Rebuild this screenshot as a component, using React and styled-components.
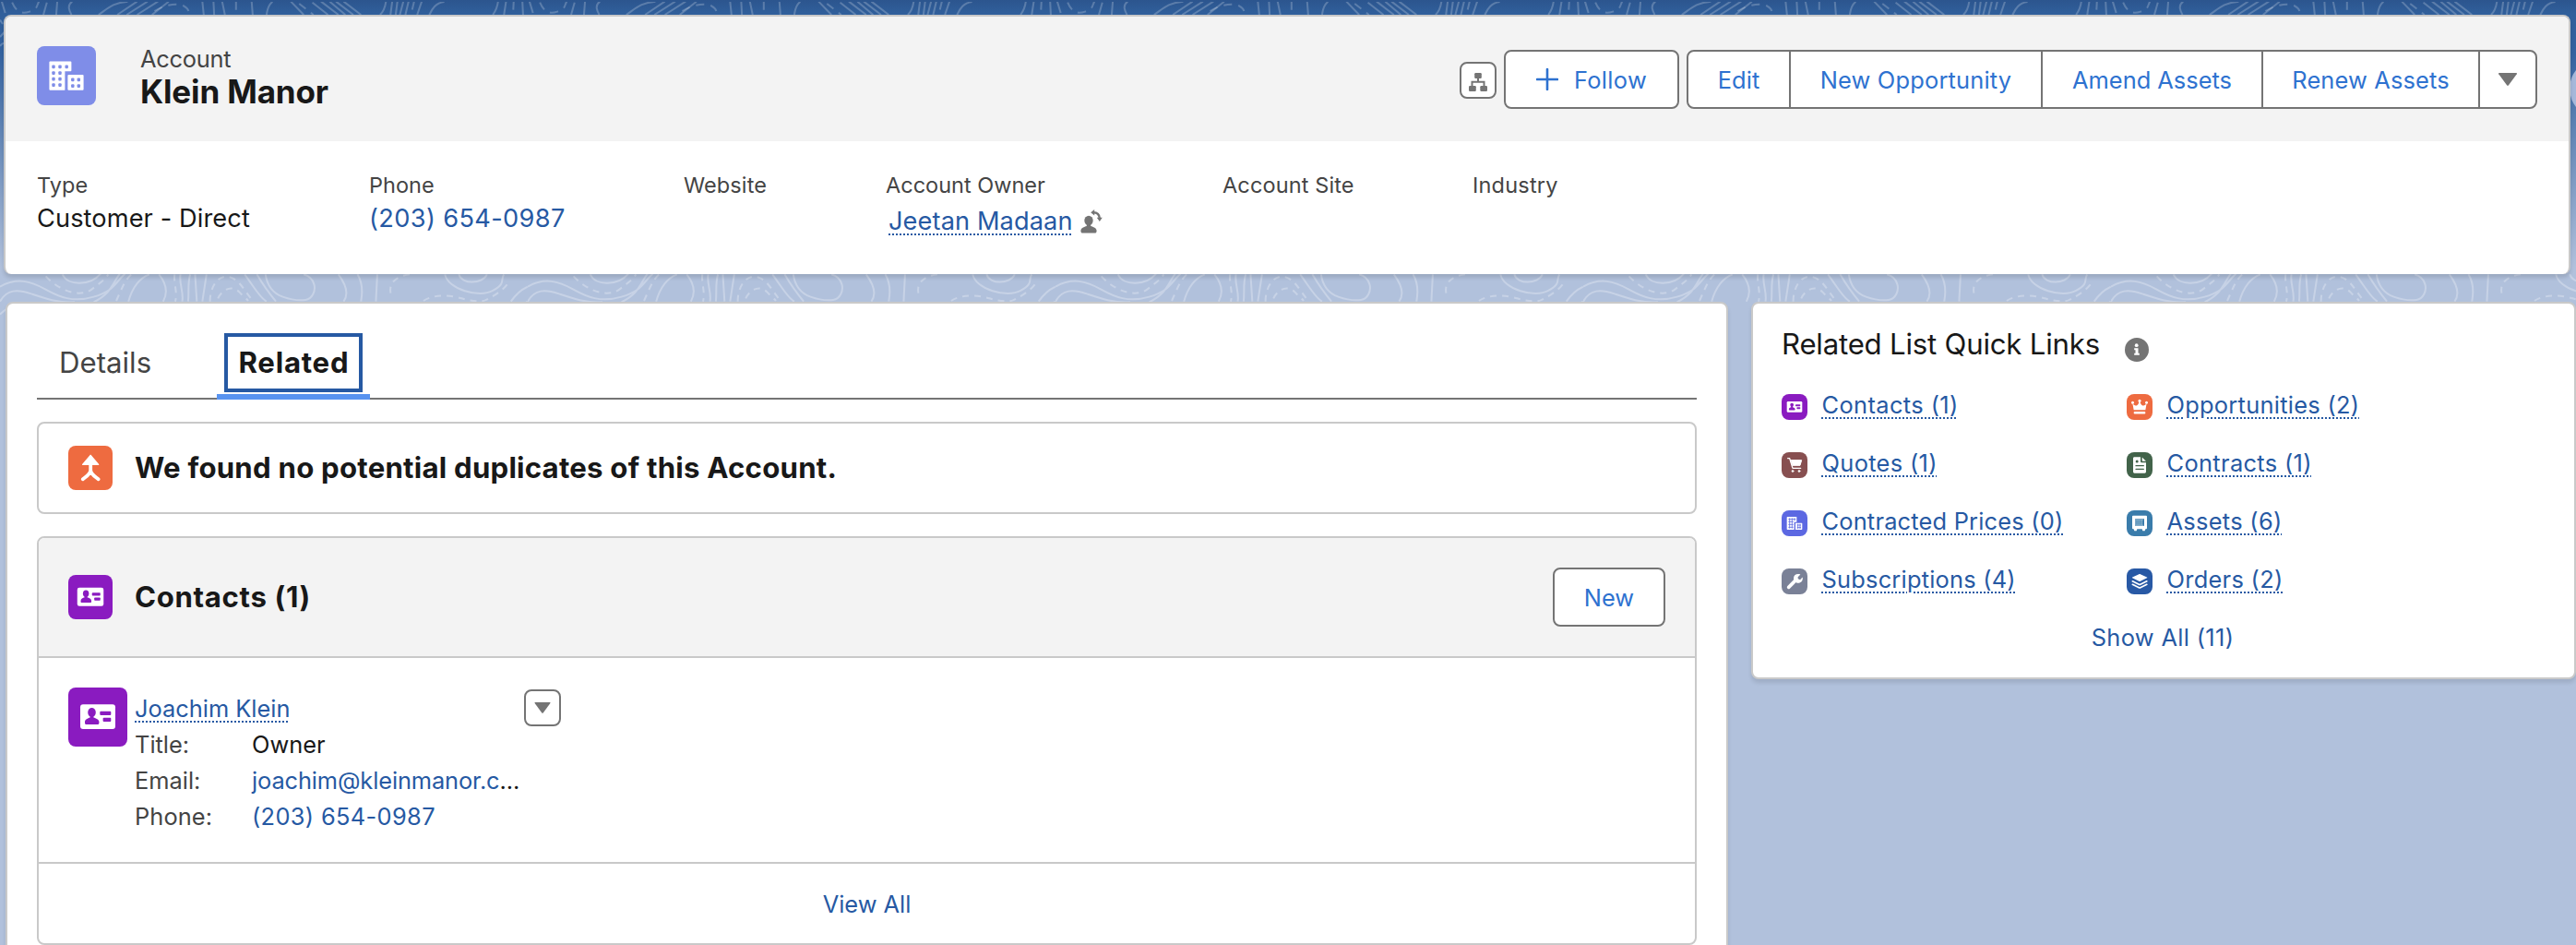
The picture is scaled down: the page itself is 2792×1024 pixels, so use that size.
import React from "react";
import styled, { createGlobalStyle, css } from "styled-components";

const color = {
  text: "#181818",
  label: "#444444",
  link: "#2659a3",
  action: "#2e72d0",
  border: "#c9c9c9",
  strong: "#747474",
  header: "#f3f3f3",
  page: "#b1c1dc",
};

const GlobalStyle = createGlobalStyle`
  *, *::before, *::after { box-sizing: border-box; }
  body {
    margin: 0;
    background: ${color.page};
    color: ${color.text};
    font-family: Inter, "Liberation Sans", sans-serif;
    font-size: 25.4px;
    line-height: 39px;
  }
`;

/* ---------- page ---------- */

const Page = styled.div`
  display: grid;
  grid-template: 1024px / 2792px;
  width: 2792px;
  height: 1024px;
  overflow: hidden;
  > * { grid-area: 1 / 1; }
`;

const Backdrop = styled.svg`
  display: block;
  width: 2792px;
  height: 1024px;
`;

const Content = styled.main`
  display: flex;
  flex-direction: column;
  padding-top: 16px;
  z-index: 1;
`;

const Columns = styled.div`
  display: flex;
  flex: none;
  align-items: flex-start;
  gap: 25px;
  padding: 30px 0 0 6px;
`;

/* ---------- text ---------- */

const Text = styled.span`
  letter-spacing: ${(p) => p.$track || 0}px;
  white-space: nowrap;
`;

const Heading = styled.h2`
  margin: 0;
  font-size: 31.2px;
  line-height: 48px;
  font-weight: ${(p) => (p.$light ? 400 : 700)};
  letter-spacing: ${(p) => p.$track || 0}px;
  white-space: nowrap;
`;

const Link = styled.a`
  color: ${color.link};
  letter-spacing: ${(p) => p.$track || 0}px;
  white-space: nowrap;
  text-decoration: none;
  ${(p) =>
    p.$dotted &&
    css`
      text-decoration: underline dotted 2px;
      text-underline-offset: 4px;
    `}
`;

/* ---------- record header ---------- */

const RecordCard = styled.section`
  flex: none;
  width: 2782px;
  height: 281px;
  margin-left: 4px;
  border: 2px solid ${color.border};
  border-bottom: 0;
  border-radius: 8px;
  background: #fff;
  box-shadow: 0 4px 4px rgba(0, 0, 0, 0.12);
  overflow: hidden;
`;

const RecordTop = styled.header`
  display: flex;
  align-items: flex-start;
  height: 135px;
  padding: 29px 34px 0;
  background: ${color.header};
`;

const RecordTitle = styled.div`
  display: flex;
  flex-direction: column;
  flex: 1;
  padding-left: 48px;
`;

const ObjectName = styled(Text)`
  color: ${color.label};
  line-height: 33px;
`;

const RecordName = styled.h1`
  margin: 0;
  font-size: 35px;
  line-height: 38px;
  font-weight: 700;
  letter-spacing: -0.15px;
`;

const Tile = styled.span`
  display: block;
  flex: none;
  width: ${(p) => p.$size}px;
  height: ${(p) => p.$size}px;
  margin-top: ${(p) => p.$top || 0}px;
  border-radius: 8px;
  background: ${(p) => p.$fill};
  svg { display: block; width: 100%; height: 100%; }
`;

const Actions = styled.div`
  display: flex;
  align-items: center;
  gap: 8px;
  margin-top: 7px;
`;

const IconButton = styled.button`
  display: flex;
  align-items: center;
  justify-content: center;
  flex: none;
  width: 40px;
  height: 40px;
  margin: ${(p) => p.$top || 0}px 0 0;
  padding: ${(p) => p.$inset || 0}px 0 0;
  border: 2px solid ${color.strong};
  border-radius: 8px;
  background: #fff;
`;

const Button = styled.button`
  display: flex;
  align-items: center;
  justify-content: center;
  gap: 17px;
  width: ${(p) => p.$width}px;
  height: 64px;
  padding: 0;
  border: 2px solid ${color.strong};
  border-radius: 8px;
  background: #fff;
  color: ${color.action};
  font: inherit;
`;

const ButtonGroup = styled.div`
  display: flex;
  ${Button} { border-radius: 0; }
  ${Button} + ${Button} { margin-left: -2px; }
  ${Button}:first-child { border-radius: 8px 0 0 8px; }
  ${Button}:last-child { border-radius: 0 8px 8px 0; }
`;

const Fields = styled.div`
  display: flex;
  padding: 32px 34px 0;
`;

const Field = styled.div`
  width: ${(p) => p.$width}px;
`;

const FieldLabel = styled.div`
  color: ${color.label};
  font-size: 23.5px;
  line-height: 31px;
  letter-spacing: ${(p) => p.$track || 0}px;
`;

const FieldValue = styled.div`
  display: flex;
  align-items: flex-start;
  font-size: 27.2px;
  line-height: 42px;
  ${(p) =>
    p.$owner &&
    css`
      gap: 8px;
      padding: 3px 0 0 3px;
      svg { margin-top: 8px; }
    `}
`;

/* ---------- related lists ---------- */

const Panel = styled.section`
  flex: none;
  width: ${(p) => p.$width}px;
  border: 2px solid ${color.border};
  border-radius: 8px;
  background: #fff;
  box-shadow: 0 4px 4px rgba(0, 0, 0, 0.1);
`;

const MainPanel = styled(Panel)`
  padding: 0 32px;
  height: 760px;
`;

const Tabs = styled.nav`
  display: flex;
  height: 104px;
  border-bottom: 2px solid ${color.strong};
  font-size: 31.2px;
`;

const Tab = styled.div`
  width: ${(p) => p.$width}px;
  height: 104px;
  padding: 32px 0 0 24px;
  line-height: 64px;
  color: ${color.label};
  ${(p) =>
    p.$active &&
    css`
      padding-left: 8px;
      border-bottom: 6px solid #5893f0;
      color: ${color.text};
      font-weight: 700;
    `}
`;

const FocusRing = styled.span`
  display: flex;
  width: 150px;
  height: 64px;
  padding-left: 11.5px;
  border: 4px solid ${color.link};
  line-height: 56px;
`;

const List = styled.article`
  margin-top: 24px;
  border: 2px solid ${color.border};
  border-radius: 8px;
  overflow: hidden;
`;

const ListHeader = styled.header`
  display: flex;
  align-items: center;
  gap: 24px;
  height: ${(p) => p.$height}px;
  padding: 0 32px;
  ${(p) =>
    p.$shaded &&
    css`
      border-bottom: 2px solid ${color.border};
      background: ${color.header};
    `}
  > ${Button} { margin-left: auto; }
`;

const ContactRow = styled.div`
  display: flex;
  align-items: flex-start;
  gap: 8px;
  height: 221px;
  padding: 32px;
`;

const ContactInfo = styled.div`
  width: 414px;
  padding-top: 3px;
`;

const Detail = styled.div`
  display: grid;
  grid-template-columns: 127px 1fr;
`;

const DetailLabel = styled(Text)`
  color: ${color.label};
`;

const ListFooter = styled.footer`
  display: flex;
  align-items: center;
  justify-content: center;
  height: 88px;
  border-top: 2px solid ${color.border};
`;

/* ---------- quick links ---------- */

const QuickPanel = styled(Panel)`
  height: 409px;
  padding: 20px 31px 24px;
`;

const QuickTitle = styled.div`
  display: flex;
  align-items: flex-start;
  gap: 27px;
  height: 70px;
  svg { margin-top: 17px; }
`;

const QuickGrid = styled.div`
  display: grid;
  grid-template-columns: 374px 1fr;
  grid-auto-rows: 63px;
`;

const QuickItem = styled.div`
  display: flex;
  align-items: flex-start;
  gap: 15.5px;
`;

const ShowAll = styled.div`
  display: flex;
  justify-content: center;
  padding-right: 2px;
`;

/* ---------- icons ---------- */

const Buildings = () => (
  <svg viewBox="0 0 64 64">
    <path
      fill="#fff"
      fillRule="evenodd"
      d="M14.4 16.6h22a1 1 0 0 1 1 1v8.6a1 1 0 0 1-1 1h-6v20a.6.6 0 0 1-.6.6H14.4a1 1 0 0 1-1-1V17.6a1 1 0 0 1 1-1Zm20 14.4h15.200a1 1 0 0 1 1 1v14.800a1 1 0 0 1-1 1H34.400a1 1 0 0 1-1-1V32a1 1 0 0 1 1-1Z"
    />
    <g fill="#7f8de8">
      {[22.4, 29, 35.6, 42.1].map((y, r) =>
        (r === 0 ? [18, 25, 32.2] : [18, 25]).map((x) => (
          <rect key={`${x}-${y}`} x={x - 1.7} y={y - 1.8} width="3.4" height="3.7" rx="1" />
        ))
      )}
      {[36.3, 43].map((y) =>
        [38.8, 45.3].map((x) => <rect key={`${x}-${y}`} x={x - 1.7} y={y - 1.8} width="3.4" height="3.7" rx="1" />)
      )}
    </g>
  </svg>
);

const Merge = () => (
  <svg viewBox="0 0 48 48">
    <path fill="#fff" d="M24.900 10.200 33 19.700c.6.700.3 1.400-.7 1.400H16c-1 0-1.300-.7-.7-1.400l8.100-9.500c.5-.5 1-.5 1.500 0Z" />
    <path d="M24.200 19v8.400M15.800 36.200c4-3.200 8.400-5.400 8.400-10 0 4.600 4.400 6.800 8.400 10" fill="none" stroke="#fff" strokeWidth="3.800" strokeLinecap="round" />
  </svg>
);

const ContactCard = ({ fill }) => (
  <svg viewBox="0 0 64 64">
    <rect x="13" y="18.300" width="38" height="26.700" rx="3" fill="#fff" />
    <g fill={fill}>
      <ellipse cx="25.500" cy="27" rx="4.300" ry="4.900" />
      <path d="M23.600 29h3.800v3.400c2.500.9 6 2.100 6 4.800v1.300c0 .9-.7 1.500-1.500 1.500H19.500c-.9 0-1.500-.6-1.500-1.500v-1.300c0-2.700 3.200-3.900 5.600-4.800Z" />
      <rect x="34.300" y="25.800" width="12" height="4.200" rx="1" />
      <rect x="37.600" y="32.800" width="8.700" height="4.200" rx="1" />
    </g>
  </svg>
);

const Cart = () => (
  <svg viewBox="0 0 84 84" fill="none" stroke="#fff" strokeLinecap="round" strokeLinejoin="round">
    <path d="M20 20h6l10 32h26" strokeWidth="4" />
    <path d="M30 26h35l-5 17H35Z" fill="#fff" strokeWidth="3" />
    <circle cx="36" cy="61.500" r="3" fill="#fff" strokeWidth="2" />
    <circle cx="57" cy="61.500" r="3" fill="#fff" strokeWidth="2" />
  </svg>
);

const Crown = () => (
  <svg viewBox="0 0 84 84" fill="#fff">
    <circle cx="19.500" cy="28" r="4.500" />
    <circle cx="42" cy="22" r="4.500" />
    <circle cx="64.500" cy="28" r="4.500" />
    <path d="M19 30c5 8 14 12 20 0l2-8h2l2 8c6 12 15 8 20 0l-4 22H23Z" />
    <rect x="23" y="57" width="38" height="7.500" rx="3" />
  </svg>
);

const Contract = () => (
  <svg viewBox="0 0 84 84">
    <path fill="#fff" d="M25 16h20v13c0 3 2 5 5 5h13v30c0 2-2 4-4 4H25c-2 0-4-2-4-4V20c0-2 2-4 4-4Z" />
    <path fill="#fff" d="M50 16.500 63 29H52c-1 0-2-1-2-2Z" />
    <path d="M30 44h25M30 55h25" stroke="#42634a" strokeWidth="4" strokeLinecap="round" />
    <circle cx="33.500" cy="30" r="4.500" fill="#42634a" />
  </svg>
);

const SmallBuildings = () => (
  <svg viewBox="0 0 84 84">
    <path fill="#fff" d="M19 21h30v17H41v25H19c-1 0-2-1-2-2V23c0-1 1-2 2-2ZM45 41h20c1 0 2 1 2 2v18c0 1-1 2-2 2H45Z" />
    <path
      d="M22 29h24M22 37h16M22 46h16M22 55h16M26 25v34M34 25v34M42 25v9M50 48h13M50 56h13M53 44v16M60 44v16"
      stroke="#5c68e2"
      strokeWidth="2.400"
    />
  </svg>
);

const Safe = () => (
  <svg viewBox="0 0 84 84">
    <path fill="#fff" d="M21 17h42c2 0 3 1 3 3v38c0 2-1 3-3 3h-2l-2 6h-7l-2-6H34l-2 6h-7l-2-6h-2c-2 0-3-1-3-3V20c0-2 1-3 3-3Z" />
    <rect x="28" y="27" width="29" height="24" rx="1" fill="#3a7cab" />
    <path d="M33 30v18M38.500 30v18M44 30v18M49.500 30v18M30 29.500h25M30 49h25" stroke="#cfe0ec" strokeWidth="1.800" />
  </svg>
);

const Wrench = () => (
  <svg viewBox="0 0 84 84">
    <path d="M23 61 46 38" stroke="#fff" strokeWidth="11" strokeLinecap="round" />
    <path fill="#fff" d="M60 19c1 0 1 1 .5 1.500L53 28v4l4 4h4l6-6.500c1-.5 1.500 0 1.500 1C69 40 63 47 54 47c-9 0-15-7-15-15 0-9 8-16 21-13Z" />
  </svg>
);

const Layers = () => (
  <svg viewBox="0 0 84 84">
    <path fill="#fff" d="M40 18.500c1.500-1 3-1 4.500 0L66 28.500c1.500.8 1.500 1.800 0 2.600L44.500 41.500c-1.500.8-3 .8-4.500 0L18.500 31c-1.500-.8-1.500-1.800 0-2.600Z" />
    <path d="m19 41.500 21 10.200c1.500.7 3 .7 4.500 0l21-10.200M19 52l21 10.200c1.500.7 3 .7 4.500 0L65.500 52" fill="none" stroke="#fff" strokeWidth="5" strokeLinecap="round" />
  </svg>
);

const Caret = ({ w, h }) => (
  <svg width={w} height={h} viewBox="0 0 20 14">
    <path d="M.8 0h18.400c.8 0 1 .6.600 1.200l-9 12.200c-.5.600-1.100.6-1.600 0L.2 1.200C-.2.600 0 0 .8 0Z" fill={color.strong} />
  </svg>
);

const Hierarchy = () => (
  <svg width="20" height="20" viewBox="0 0 20 20">
    <g fill={color.strong}>
      <rect x="6.200" y="0" width="7.600" height="6" rx="1.200" />
      <rect x="0" y="14" width="7.800" height="6" rx="1.200" />
      <rect x="12.300" y="14" width="7.700" height="6" rx="1.200" />
    </g>
    <path d="M10 5v5M3.500 15v-5.200h13V15" fill="none" stroke={color.strong} strokeWidth="2" />
  </svg>
);

const Plus = () => (
  <svg width="24" height="24" viewBox="0 0 24 24">
    <path d="M12 1v22M1 12h22" stroke={color.action} strokeWidth="2.600" strokeLinecap="round" />
  </svg>
);

const ChangeOwner = () => (
  <svg width="24" height="26" viewBox="0 0 24 26">
    <g fill={color.strong}>
      <ellipse cx="9" cy="12" rx="4.700" ry="5.200" />
      <path d="M6.800 14h4.400v4c2.800.8 6.400 2 6.400 5.200 0 1.600-.8 2.400-2 2.400H2.400c-1.200 0-2-.8-2-2.400C.4 20 4 18.800 6.800 18Z" />
      <path d="M15.200 0v6.400L11.200 3.200ZM17.800 8.800h6L20.800 13Z" />
    </g>
    <path d="M14 3.200c4 0 6.600 2.400 6.800 6.400" fill="none" stroke={color.strong} strokeWidth="2.400" />
  </svg>
);

const Info = () => (
  <svg width="26" height="26" viewBox="0 0 26 26">
    <circle cx="13" cy="13" r="13" fill={color.strong} />
    <circle cx="12.700" cy="8.200" r="1.900" fill="#fff" />
    <path d="M10.200 11.300h4.300v5.500h1.300v1.900h-5.600v-1.900h1.300v-3.500h-1.300Z" fill="#fff" />
  </svg>
);

/* ---------- topographic backdrop ---------- */

const TOP_LINES =
  "M5 5L15 42M135 8L125 48M165 5L162 48M208 5C192 18 200 35 206 48M368 5C325 8 310 28 284 48M395 5L338 48M425 5L365 48M455 5L395 48M486 5L438 48M583 5L587 48M615 5L617 48M640 5L648 48M725 5L728 48M785 5C770 20 770 35 768 48M838 5L875 48M900 8L945 48M925 5L975 48M950 5L995 48M968 5L1018 48M990 5L1040 48M1112 5Q1108 35 1095 48M1130 5L1125 48M1145 5L1140 48M1162 5L1152 48M1177 5L1168 48M1215 5L1202 48M1280 6C1255 10 1245 28 1237 48M1435 5Q1432 30 1420 48M1458 5L1452 48M1505 5L1507 48M0 65L8 78M0 120L12 105M0 150Q5 140 12 140";
const TOP_DASHES = "M35 8C45 35 60 48 85 38S105 20 112 5M445 36C480 12 515 10 530 20S542 35 545 44M680 5V48M862 12L903 48M1193 5L1184 48M1480 5L1478 48";
const LOW_LINES =
  "M0 62C50 30 90 45 130 70S210 115 270 95S330 50 360 20M0 110C20 70 50 70 90 85S170 116 215 112M180 22C195 60 260 60 290 20M270 112C320 85 325 50 345 20M370 110C380 70 400 35 430 22M458 22C485 60 480 90 470 110M520 22C515 50 530 80 525 110M548 22C540 50 545 80 542 110M562 22L567 110M595 22L583 110M705 22C730 60 750 100 768 110M740 22C760 60 780 90 795 110M765 22C770 60 790 85 815 95S860 108 880 105S910 75 905 55S885 25 875 22M975 22C1000 60 1003 90 990 110M1030 22C1045 50 1045 80 1040 110M1087 22L1083 110M1282 22C1290 70 1380 100 1420 75S1440 40 1452 22M1322 22C1330 55 1390 55 1403 22M1472 110C1490 80 1505 70 1520 62M1505 122L1520 110M0 152C10 140 20 130 40 125";
const LOW_DASHES =
  "M132 28C170 75 230 100 265 70S300 40 312 22M335 108C350 70 360 40 378 22M503 22C500 50 512 80 505 110M605 110C605 60 630 22 660 30S700 70 730 110M628 100C640 70 670 55 690 80S710 100 715 108M1180 22C1130 30 1115 60 1130 100M1220 108C1250 85 1300 90 1330 100S1390 112 1400 105S1450 80 1470 40";

const Contours = () => (
  <Backdrop viewBox="0 0 2792 1024">
    <defs>
      <linearGradient id="sky" x1="0" y1="0" x2="0" y2="290" gradientUnits="userSpaceOnUse">
        <stop offset="0" stopColor="#2c558e" />
        <stop offset=".05" stopColor="#305f9b" />
        <stop offset=".2" stopColor="#3463a0" />
        <stop offset="1" stopColor={color.page} />
      </linearGradient>
      <pattern id="contours" width="572" height="1024" patternUnits="userSpaceOnUse">
        <g fill="none" stroke="#fff" strokeWidth="2">
          <g transform="scale(.3762 .3333)" strokeOpacity=".22">
            <path d={TOP_LINES} vectorEffect="non-scaling-stroke" />
            <path d={TOP_DASHES} vectorEffect="non-scaling-stroke" strokeDasharray="9 7" />
          </g>
          <g transform="translate(0 290) scale(.3762 .3333)" strokeOpacity=".28">
            <path d={LOW_LINES} vectorEffect="non-scaling-stroke" />
            <path d={LOW_DASHES} vectorEffect="non-scaling-stroke" strokeDasharray="7 6" />
          </g>
        </g>
      </pattern>
    </defs>
    <rect width="2792" height="1024" fill={color.page} />
    <rect width="2792" height="290" fill="url(#sky)" />
    <rect y="2" width="2792" height="361" fill="url(#contours)" />
    <circle cx="2817" cy="96" r="32" fill="#a5b8da" />
  </Backdrop>
);

/* ---------- data ---------- */

const PURPLE = "#8a1bc0";

const recordActions = [
  { label: "Edit", width: 113, track: 0.1 },
  { label: "New Opportunity", width: 275, track: 0.2 },
  { label: "Amend Assets", width: 241, track: 0 },
  { label: "Renew Assets", width: 237, track: 0.15 },
];

const quickLinks = [
  { label: "Contacts (1)", track: 0.4, fill: PURPLE, icon: <ContactCard fill={PURPLE} /> },
  { label: "Opportunities (2)", track: 0.28, fill: "#ee6b40", icon: <Crown /> },
  { label: "Quotes (1)", track: 0.35, fill: "#874f50", icon: <Cart /> },
  { label: "Contracts (1)", track: 0.35, fill: "#42634a", icon: <Contract /> },
  { label: "Contracted Prices (0)", track: 0.2, fill: "#5c68e2", icon: <SmallBuildings /> },
  { label: "Assets (6)", track: 0.3, fill: "#3a7cab", icon: <Safe /> },
  { label: "Subscriptions (4)", track: 0.22, fill: "#7a8197", icon: <Wrench /> },
  { label: "Orders (2)", track: 0.3, fill: "#2859a5", icon: <Layers /> },
];

export default function App() {
  return (
    <Page>
      <GlobalStyle />
      <Contours />
      <Content>
        <RecordCard>
          <RecordTop>
            <Tile $size={64} $top={3} $fill="#7f8de8"><Buildings /></Tile>
            <RecordTitle>
              <ObjectName $track={-0.25}>Account</ObjectName>
              <RecordName>Klein Manor</RecordName>
            </RecordTitle>
            <Actions>
              <IconButton $top={2} $inset={4} aria-label="View hierarchy"><Hierarchy /></IconButton>
              <Button $width={190}><Plus /><Text $track={0.35}>Follow</Text></Button>
              <ButtonGroup>
                {recordActions.map((a) => (
                  <Button key={a.label} $width={a.width}><Text $track={a.track}>{a.label}</Text></Button>
                ))}
                <Button $width={64} aria-label="More actions"><Caret w={20} h={14} /></Button>
              </ButtonGroup>
            </Actions>
          </RecordTop>
          <Fields>
            <Field $width={360}>
              <FieldLabel $track={0.1}>Type</FieldLabel>
              <FieldValue><Text $track={0.1}>Customer - Direct</Text></FieldValue>
            </Field>
            <Field $width={341}>
              <FieldLabel>Phone</FieldLabel>
              <FieldValue><Link $track={0.36}>(203) 654-0987</Link></FieldValue>
            </Field>
            <Field $width={219}><FieldLabel $track={0.1}>Website</FieldLabel></Field>
            <Field $width={365}>
              <FieldLabel>Account Owner</FieldLabel>
              <FieldValue $owner><Link $dotted $track={0.1}>Jeetan Madaan</Link><ChangeOwner /></FieldValue>
            </Field>
            <Field $width={271}><FieldLabel $track={0.12}>Account Site</FieldLabel></Field>
            <Field $width={200}><FieldLabel $track={0.2}>Industry</FieldLabel></Field>
          </Fields>
        </RecordCard>

        <Columns>
          <MainPanel $width={1867}>
            <Tabs>
              <Tab $width={195}><Text>Details</Text></Tab>
              <Tab $width={166} $active><FocusRing><Text $track={0.75}>Related</Text></FocusRing></Tab>
            </Tabs>

            <List>
              <ListHeader $height={96}>
                <Tile $size={48} $fill="#ee6b40"><Merge /></Tile>
                <Heading $track={0.22}>We found no potential duplicates of this Account.</Heading>
              </ListHeader>
            </List>

            <List>
              <ListHeader $height={130} $shaded>
                <Tile $size={48} $fill={PURPLE}><ContactCard fill={PURPLE} /></Tile>
                <Heading $track={0.65}>Contacts (1)</Heading>
                <Button $width={122}><Text>New</Text></Button>
              </ListHeader>
              <ContactRow>
                <Tile $size={64} $fill={PURPLE}><ContactCard fill={PURPLE} /></Tile>
                <ContactInfo>
                  <Link $dotted>Joachim Klein</Link>
                  <Detail><DetailLabel>Title:</DetailLabel><Text>Owner</Text></Detail>
                  <Detail><DetailLabel>Email:</DetailLabel><Text><Link $track={-0.12}>joachim@kleinmanor.c</Link>...</Text></Detail>
                  <Detail><DetailLabel $track={0.1}>Phone:</DetailLabel><Link $track={0.35}>(203) 654-0987</Link></Detail>
                </ContactInfo>
                <IconButton $top={2} aria-label="Contact actions"><Caret w={18} h={12} /></IconButton>
              </ContactRow>
              <ListFooter><Link>View All</Link></ListFooter>
            </List>
          </MainPanel>

          <QuickPanel $width={894}>
            <QuickTitle>
              <Heading $light $track={-0.22}>Related List Quick Links</Heading>
              <Info />
            </QuickTitle>
            <QuickGrid>
              {quickLinks.map((q) => (
                <QuickItem key={q.label}>
                  <Tile $size={28} $top={8} $fill={q.fill}>{q.icon}</Tile>
                  <Link $dotted $track={q.track}>{q.label}</Link>
                </QuickItem>
              ))}
            </QuickGrid>
            <ShowAll><Link $track={0.35}>Show All (11)</Link></ShowAll>
          </QuickPanel>
        </Columns>
      </Content>
    </Page>
  );
}
